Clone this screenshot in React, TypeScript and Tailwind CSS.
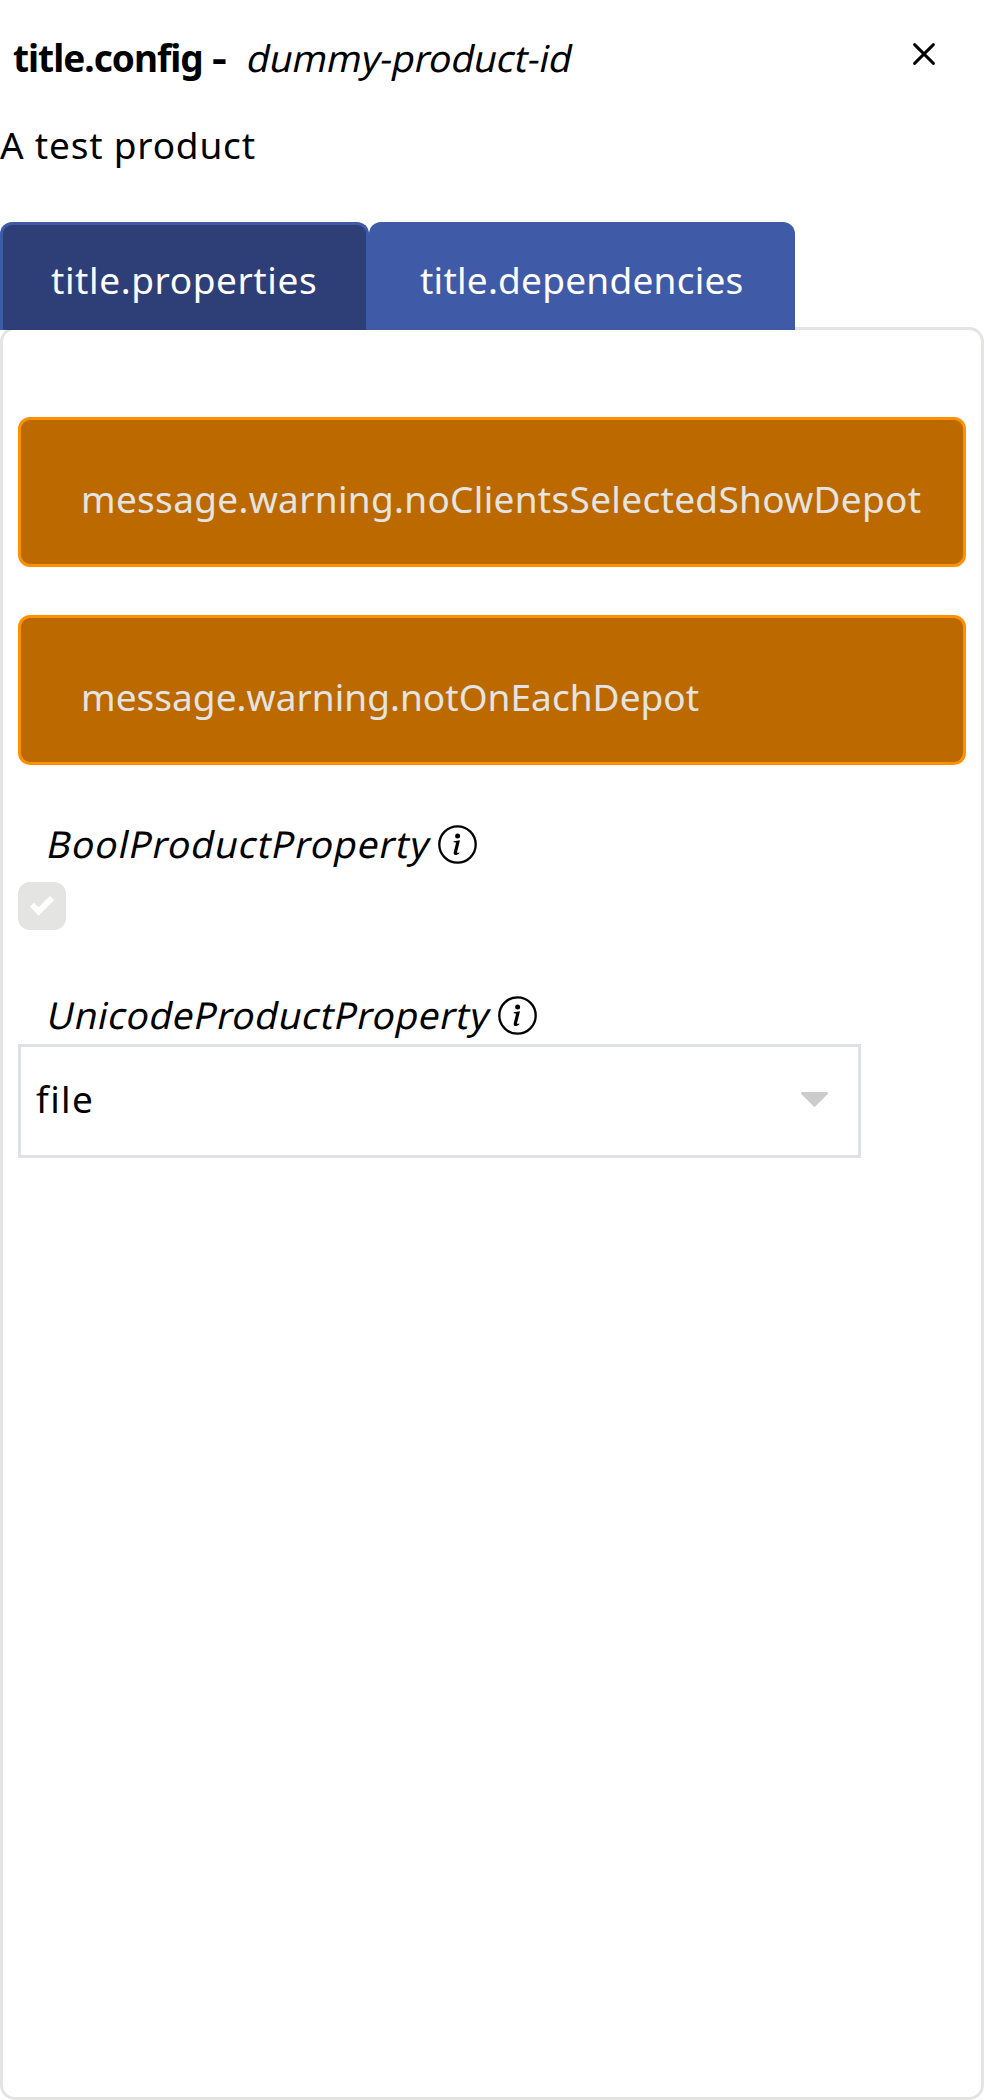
import type { ReactNode } from "react";

function InfoIcon() {
  return (
    <svg viewBox="0 0 39 39" className="h-[39px] w-[39px] shrink-0" fill="none">
      <circle cx="19.5" cy="19.5" r="18.2" stroke="black" strokeWidth="2.3" />
      <circle cx="19.6" cy="10.9" r="2.5" fill="black" />
      <path
        d="M15.7 16.2 L22 15.3 L19.2 26.6 C18.9 27.9 19.3 28.2 21.4 27.6 L21.1 28.7 C17.4 30.9 14.9 30.3 15.9 26.4 L17.9 18.6 C18.1 17.6 17.6 17.2 15.5 17.3 Z"
        fill="black"
      />
    </svg>
  );
}

function Warning({ children }: { children: ReactNode }) {
  return (
    <div className="h-[150px] rounded-[12px] border-[3px] border-[#ff9100] bg-[#bc6900] pt-[53px] pl-[60px] whitespace-nowrap text-[#e4e4e2]">
      {children}
    </div>
  );
}

export default function App() {
  return (
    <div className="flex h-[2100px] w-[984px] flex-col overflow-hidden bg-white font-['Noto_Sans',sans-serif] text-[37px] leading-[51px] text-black">
      <header className="flex h-[83px] shrink-0 items-start pt-8">
        <h1 className="flex w-[235px] pl-[13px] text-[37px] font-bold tracking-[-1px]">
          title.config
          <span className="ml-[9px] inline-block origin-left scale-x-[1.25]">-</span>
        </h1>
        <span className="ml-[10px] inline-block origin-[0_40px] -skew-x-12 tracking-[-0.1px] whitespace-nowrap">
          dummy-product-id
        </span>
        <button className="mt-[11px] mr-[49px] ml-auto" aria-label="Close">
          <svg viewBox="0 0 22 22" className="h-[22px] w-[22px]" stroke="black" strokeWidth="2.9" strokeLinecap="round">
            <path d="M1.6 1.6 20.4 20.4M20.4 1.6 1.6 20.4" />
          </svg>
        </button>
      </header>

      <p className="mt-9 h-[51px] shrink-0 tracking-[0.8px]">A test product</p>

      <nav className="z-10 mt-[52px] -mb-[3px] flex h-[108px] shrink-0 text-white">
        <button className="-mr-[3px] flex w-[369px] items-start rounded-t-[12px] border-[3px] border-b-0 border-[#3f5aa6] bg-[#2e3f77] pt-[29px] pl-[48px] tracking-[0.6px]">
          title.properties
        </button>
        <button className="ml-[3px] flex w-[426px] items-start rounded-t-[12px] bg-[#3f5aa6] pt-8 pl-[51px] tracking-[0.25px] shadow-[-3px_12px_0_0_#3f5aa6] [clip-path:inset(0_0_0_-3px)]">
          title.dependencies
        </button>
      </nav>

      <main className="flex grow flex-col rounded-[15px] border-[3px] border-[#e4e4e2] px-[15px] pt-[87px]">
        <div className="flex flex-col gap-12">
          <Warning>
            <span className="tracking-[0.31px]">message.warning.noClientsSelectedShowDepot</span>
          </Warning>
          <Warning>
            <span className="tracking-[0.04px]">message.warning.notOnEachDepot</span>
          </Warning>
        </div>

        <div className="mt-[53px] flex h-[51px] items-start pl-[27px]">
          <label className="w-[393px] origin-[0_40px] -skew-x-12 tracking-[0.95px] whitespace-nowrap">
            BoolProductProperty
          </label>
          <span className="mt-[7px] flex">
            <InfoIcon />
          </span>
        </div>
        <div className="mt-[13px] flex h-12 w-12 items-center justify-center rounded-[12px] bg-[#e4e4e2]">
          <svg viewBox="0 0 48 48" className="h-12 w-12" fill="white">
            <path d="M12 24.5 15.8 20.7 20.5 25.3 31.8 14 36 18.2 20.5 33.8Z" />
          </svg>
        </div>

        <div className="mt-[59px] flex h-[51px] items-start pl-[27px]">
          <label className="w-[453px] origin-[0_40px] -skew-x-12 tracking-[0.58px] whitespace-nowrap">
            UnicodeProductProperty
          </label>
          <span className="mt-[7px] flex">
            <InfoIcon />
          </span>
        </div>
        <div className="mt-1 flex h-[114px] w-[843px] items-start justify-between border-[3px] border-[#dee2e6] pt-[26px] pr-[30px] pl-[15px]">
          <span className="tracking-[1.4px]">file</span>
          <svg viewBox="0 0 27 15" className="mt-[19px] h-[15px] w-[27px]" fill="#cccccc">
            <path d="M1.5 0H25.5Q28 .8 26.3 2.5L14.5 14.3Q13.5 15.4 12.5 14.3L.7 2.5Q-1 .8 1.5 0Z" />
          </svg>
        </div>
      </main>
    </div>
  );
}
